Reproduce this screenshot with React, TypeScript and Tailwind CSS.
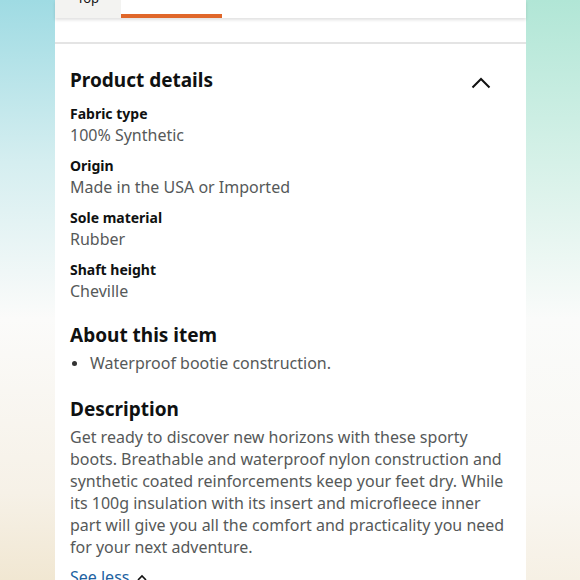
import React from "react";

const details = [
    {label: "Fabric type", value: "100% Synthetic"},
    {label: "Origin", value: "Made in the USA or Imported"},
    {label: "Sole material", value: "Rubber"},
    {label: "Shaft height", value: "Cheville"},
];

const descriptionLines = [
    "Get ready to discover new horizons with these sporty",
    "boots. Breathable and waterproof nylon construction and",
    "synthetic coated reinforcements keep your feet dry. While",
    "its 100g insulation with its insert and microfleece inner",
    "part will give you all the comfort and practicality you need",
    "for your next adventure.",
];

const font = {fontFamily: '"Noto Sans", "Liberation Sans", sans-serif'};

const App = () => {
    return (
        <div className="flex w-[580px] h-[580px] overflow-hidden" style={font}>
            <div className="w-[55px] shrink-0 bg-[linear-gradient(to_bottom,#9fdbe3_0%,#d5eef0_28%,#fbfbfa_55%,#f6f1e7_85%,#f1e7d2_100%)]"/>
            <div className="w-[471px] shrink-0 bg-white">
                <div className="h-[18px] flex shadow-[0_2px_3px_rgba(0,0,0,0.12)] relative z-10 overflow-hidden">
                    <div className="w-[66px] bg-[#f3f3f1] flex justify-center items-end">
                        <span className="text-[13px] text-[#111] leading-[16px] mb-[12px]">Top</span>
                    </div>
                    <div className="w-[101px] flex flex-col justify-end">
                        <div className="h-[4px] bg-[#e0672a]"/>
                    </div>
                </div>
                <div className="h-[24px]"/>
                <div className="h-[2px] bg-[#e4e4e4]"/>
                <div className="px-[15px] pt-[22px]">
                    <div className="flex items-start justify-between">
                        <h2 className="text-[19px] font-bold text-[#0f1111] leading-[28px]">Product details</h2>
                        <svg width="20" height="12" viewBox="0 0 20 12" className="mt-[11px] mr-[20px]">
                            <path d="M1.5 10.5 L10 2 L18.5 10.5" fill="none" stroke="#111" strokeWidth="2"/>
                        </svg>
                    </div>
                    <div className="flex flex-col gap-[9px] mt-[10px]">
                        {details.map((d, i) => (
                            <div key={i}>
                                <div className="text-[14px] font-bold text-[#0f1111] leading-[20px]">{d.label}</div>
                                <div className="text-[16px] text-[#565959] leading-[23px]">{d.value}</div>
                            </div>
                        ))}
                    </div>
                    <h2 className="text-[19px] font-bold text-[#0f1111] leading-[28px] mt-[18px]">About this item</h2>
                    <ul className="mt-[2px]">
                        <li className="flex items-center text-[16px] text-[#565959] leading-[24px]">
                            <span className="w-[5px] h-[5px] rounded-full bg-[#333] ml-[2px] mr-[13px]"/>
                            Waterproof bootie construction.
                        </li>
                    </ul>
                    <h2 className="text-[19px] font-bold text-[#0f1111] leading-[28px] mt-[20px]">Description</h2>
                    <div className="text-[16px] text-[#565959] leading-[22px] mt-[3px] -mr-[20px]">
                        {descriptionLines.map((line, i) => (
                            <div key={i} className="whitespace-nowrap text-nowrap">{line}</div>
                        ))}
                    </div>
                    <div className="flex items-center gap-[8px] mt-[7px] text-[16px] text-[#2162a1] leading-[24px]">
                        See less
                        <svg width="10" height="7" viewBox="0 0 10 7">
                            <path d="M1 6 L5 2 L9 6" fill="none" stroke="#111" strokeWidth="1.6"/>
                        </svg>
                    </div>
                </div>
            </div>
            <div className="flex-1 bg-[linear-gradient(to_bottom,#b1e6d6_0%,#d6f1e8_28%,#fafbfa_55%,#f9f7f2_85%,#f6f0e4_100%)]"/>
        </div>
    );
};

export default App;
